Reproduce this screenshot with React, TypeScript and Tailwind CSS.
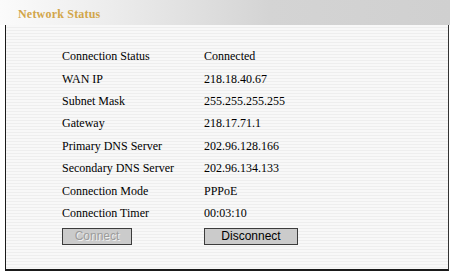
export default function App() {
  const rows: [string, string][] = [
    ["Connection Status", "Connected"],
    ["WAN IP", "218.18.40.67"],
    ["Subnet Mask", "255.255.255.255"],
    ["Gateway", "218.17.71.1"],
    ["Primary DNS Server", "202.96.128.166"],
    ["Secondary DNS Server", "202.96.134.133"],
    ["Connection Mode", "PPPoE"],
    ["Connection Timer", "00:03:10"],
  ];

  return (
    <div className="w-[450px] h-[271px] bg-white font-['Liberation_Serif',serif] text-[12px] text-black overflow-hidden">
      {/* title bar */}
      <div className="h-[25px] flex items-center pl-[18px] pt-[2px] bg-[linear-gradient(90deg,#fbfbfb_0%,#ececec_25%,#d4d4d4_60%,#d0d0d0_100%)]">
        <span className="font-bold text-[12px] text-[#d2a64a] tracking-[0.2px]">Network Status</span>
      </div>

      {/* body */}
      <div className="h-[246px] ml-[5px] mr-[1px] border-l border-r border-b-2 border-[#1a1a1a] border-r-[#333] bg-[repeating-linear-gradient(180deg,#f8f8f8_0px,#f8f8f8_2px,#eeeeee_2px,#eeeeee_3px)] pt-[20px]">
        <div className="pl-[56px]">
          {rows.map(([label, value]) => (
            <div key={label} className="flex h-[22.4px] items-center">
              <span className="w-[142px]">{label}</span>
              <span>{value}</span>
            </div>
          ))}
          <div className="flex items-center mt-[3px]">
            <div className="w-[142px]">
              <button
                disabled
                className="w-[70px] h-[17px] border border-[#3c3c3c] bg-[#cbcbcb] font-['Liberation_Sans',sans-serif] text-[12px] leading-none text-[#9c9c9c] [text-shadow:1px_1px_0_#f0f0f0]"
              >
                Connect
              </button>
            </div>
            <button className="w-[94px] h-[17px] border border-[#3c3c3c] bg-[#cbcbcb] font-['Liberation_Sans',sans-serif] text-[12px] leading-none text-black">
              Disconnect
            </button>
          </div>
        </div>
      </div>
    </div>
  );
}
